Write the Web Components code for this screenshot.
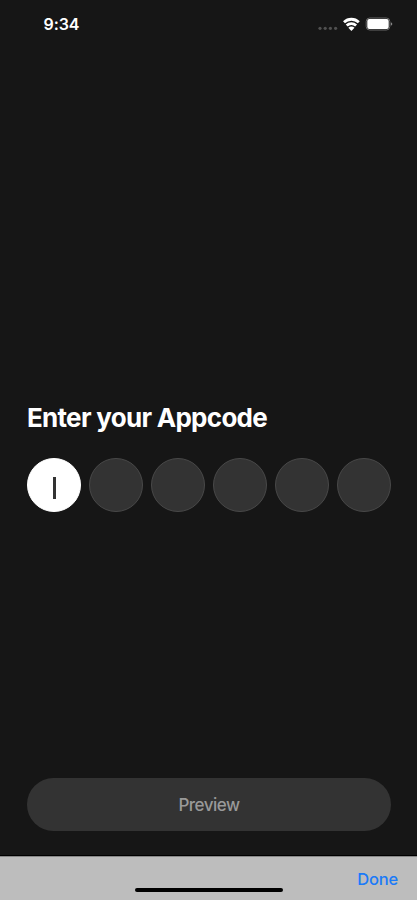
<!DOCTYPE html>
<html lang="en">
<head>
<meta charset="utf-8">
<meta name="viewport" content="width=device-width, initial-scale=1">
<title>Appcode</title>
<style>
  body {
    margin: 0;
    background: #161616;
    font-family: Inter, "Liberation Sans", sans-serif;
  }
</style>
</head>
<body>
<appcode-screen>
  <status-bar slot="status">9:34</status-bar>
  <code-form heading="Enter your Appcode" length="6"></code-form>
  <pill-button slot="action">Preview</pill-button>
  <keyboard-bar slot="keyboard">Done</keyboard-bar>
</appcode-screen>

<script>
class AppcodeScreen extends HTMLElement {
  constructor() {
    super();
    this.attachShadow({ mode: "open" });
    this.shadowRoot.innerHTML = `
      <style>
        :host {
          display: flex;
          flex-direction: column;
          height: 900px;
          overflow: hidden;
          background: #161616;
          color: white;
        }

        main {
          flex: 1;
          display: flex;
          flex-direction: column;
          justify-content: space-between;
          padding: 354px 26px 24px 27px;
        }
      </style>
      <slot name="status"></slot>
      <main>
        <slot></slot>
        <slot name="action"></slot>
      </main>
      <slot name="keyboard"></slot>
    `;
  }
}

class StatusBar extends HTMLElement {
  constructor() {
    super();
    this.attachShadow({ mode: "open" });
    this.shadowRoot.innerHTML = `
      <style>
        :host {
          display: flex;
          flex: none;
          box-sizing: border-box;
          height: 48px;
          align-items: center;
          justify-content: space-between;
          padding: 0 24px 0 43.5px;
          font-size: 16px;
          font-weight: 600;
          letter-spacing: -0.1px;
        }

        svg {
          display: block;
        }
      </style>
      <span><slot></slot></span>
      <svg width="75" height="16" viewBox="0 0 75 16">
        <g fill="#505050">
          <circle cx="2" cy="12.3" r="1.6"/>
          <circle cx="7.2" cy="12.3" r="1.6"/>
          <circle cx="12.4" cy="12.3" r="1.6"/>
          <circle cx="17.6" cy="12.3" r="1.6"/>
        </g>
        <g fill="none" stroke="white" stroke-width="2.8">
          <path d="M26 6.2a10.7 10.7 0 0 1 14.8 0"/>
          <path d="M28.7 9.5a6.8 6.8 0 0 1 9.4 0"/>
        </g>
        <path fill="white" d="M33.4 15l-3.1-3.2a4.4 4.4 0 0 1 6.2 0z"/>
        <rect x="48.2" y="2" width="23.6" height="12" rx="3.4" fill="none" stroke="#666"/>
        <rect x="49.3" y="3.1" width="21.4" height="9.8" rx="2" fill="white"/>
        <path fill="#888" d="M72.8 6.2q1.5 .5 1.5 1.8t-1.5 1.8z"/>
      </svg>
    `;
  }
}

class CodeForm extends HTMLElement {
  constructor() {
    super();
    this.attachShadow({ mode: "open" });
    this.shadowRoot.innerHTML = `
      <style>
        :host {
          display: block;
        }

        h1 {
          margin: 0 0 24px;
          font-size: 26px;
          line-height: 32px;
          font-weight: 700;
          letter-spacing: -0.71px;
          white-space: nowrap;
        }

        #digits {
          display: flex;
          justify-content: space-between;
        }
      </style>
      <h1></h1>
      <div id="digits"></div>
    `;
  }

  connectedCallback() {
    this.shadowRoot.querySelector("h1").textContent = this.getAttribute("heading");
    const digits = this.shadowRoot.querySelector("#digits");
    digits.innerHTML = "";
    for (let i = 0; i < Number(this.getAttribute("length")); i++) {
      const digit = document.createElement("code-digit");
      if (i == 0) {
        digit.setAttribute("active", "true");
      }
      digits.appendChild(digit);
    }
  }
}

class CodeDigit extends HTMLElement {
  constructor() {
    super();
    this.attachShadow({ mode: "open" });
    this.shadowRoot.innerHTML = `
      <style>
        :host {
          display: flex;
          box-sizing: border-box;
          width: 54px;
          height: 54px;
          align-items: center;
          justify-content: center;
          border: 1px solid #484848;
          border-radius: 50%;
          background: #333;
        }

        :host([active="true"]) {
          border-color: white;
          background: white;
        }

        #caret {
          display: none;
          width: 3px;
          height: 22px;
          margin-top: 5px;
          background: #333;
        }

        :host([active="true"]) #caret {
          display: block;
        }
      </style>
      <div id="caret"></div>
    `;
  }
}

class PillButton extends HTMLElement {
  constructor() {
    super();
    this.attachShadow({ mode: "open" });
    this.shadowRoot.innerHTML = `
      <style>
        :host {
          display: block;
        }

        button {
          display: block;
          width: 100%;
          height: 53px;
          padding: 0;
          border: 0;
          border-radius: 27px;
          background: #333;
          color: #999;
          font-family: inherit;
          font-size: 17px;
          font-weight: 500;
          letter-spacing: -0.5px;
        }
      </style>
      <button><slot></slot></button>
    `;
  }
}

class KeyboardBar extends HTMLElement {
  constructor() {
    super();
    this.attachShadow({ mode: "open" });
    this.shadowRoot.innerHTML = `
      <style>
        :host {
          display: grid;
          flex: none;
          grid-template-columns: 1fr 148px 1fr;
          box-sizing: border-box;
          height: 45px;
          border-top: 1px solid black;
          background: #bdbdbd;
          box-shadow: inset 0 1px #888;
        }

        #home {
          grid-column: 2;
          grid-row: 1;
          align-self: end;
          height: 4px;
          margin-bottom: 8px;
          border-radius: 2px;
          background: black;
        }

        #done {
          grid-column: 3;
          grid-row: 1;
          justify-self: end;
          padding: 13px 19px 0 0;
          color: #1a7af8;
          font-size: 16.5px;
          line-height: 21px;
          font-weight: 500;
          letter-spacing: -0.2px;
        }
      </style>
      <div id="home"></div>
      <span id="done"><slot></slot></span>
    `;
  }
}

customElements.define("appcode-screen", AppcodeScreen);
customElements.define("status-bar", StatusBar);
customElements.define("code-form", CodeForm);
customElements.define("code-digit", CodeDigit);
customElements.define("pill-button", PillButton);
customElements.define("keyboard-bar", KeyboardBar);
</script>
</body>
</html>
